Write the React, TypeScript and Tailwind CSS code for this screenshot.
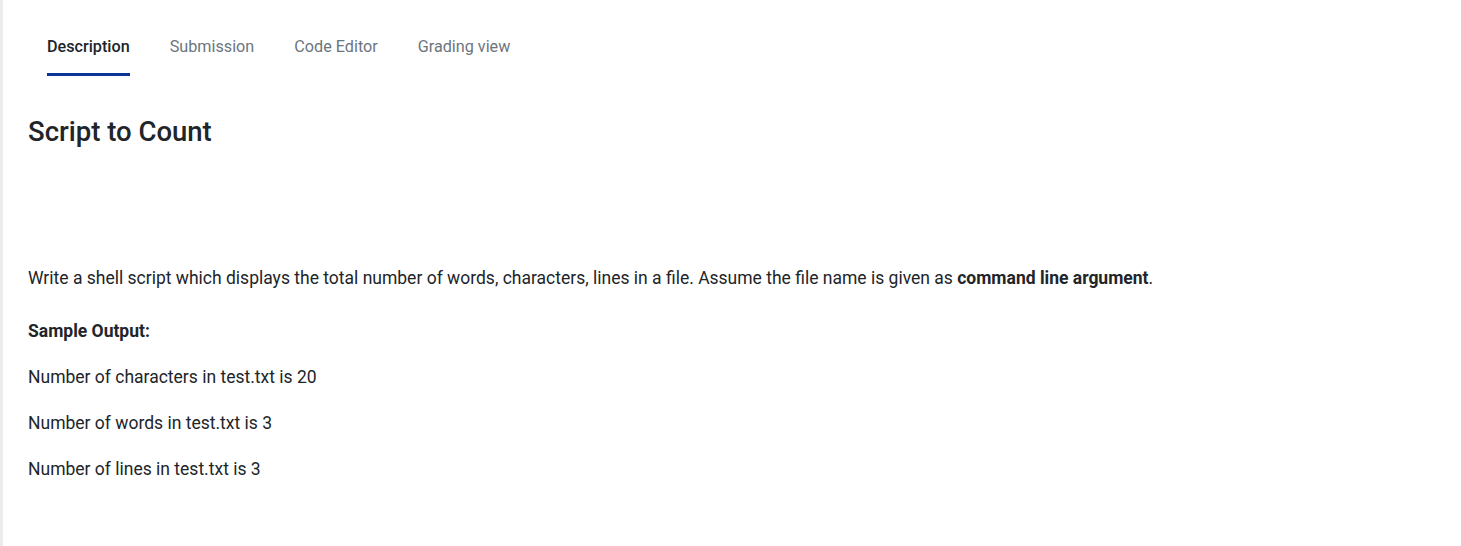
import React from "react";

const tabs = ["Description", "Submission", "Code Editor", "Grading view"];

export default function App() {
  return (
    <div
      className="min-h-[546px] w-full bg-white border-l-[3px] border-[#ebebeb] text-[#212529]"
      style={{ fontFamily: "Roboto, 'Liberation Sans', sans-serif" }}
    >
      <div className="flex pl-[24px] pt-[22px]">
        {tabs.map((t, i) => (
          <div key={t} className="mx-5 flex flex-col">
            <span
              className={`h-[51px] pt-[15px] text-[16.2px] leading-[20px] ${
                i === 0 ? "font-medium text-[#212529]" : "text-[#6c757d]"
              }`}
            >
              {t}
            </span>
            <span className={`h-[3px] ${i === 0 ? "bg-[#0a3597]" : "bg-transparent"}`} />
          </div>
        ))}
      </div>
      <div className="pl-[25px]">
        <h1 className="mt-[40px] text-[27.5px] leading-[32px] font-medium">Script to Count</h1>
        <p className="mt-[118px] text-[17.5px] leading-[24px]">
          Write a shell script which displays the total number of words, characters, lines in a file. Assume the file name is given as{" "}
          <strong className="font-bold">command line argument</strong>.
        </p>
        <p className="mt-[29px] text-[17.5px] leading-[24px] font-bold">Sample Output:</p>
        <p className="mt-[22px] text-[17.5px] leading-[24px]">Number of characters in test.txt is 20</p>
        <p className="mt-[22px] text-[17.5px] leading-[24px]">Number of words in test.txt is 3</p>
        <p className="mt-[22px] text-[17.5px] leading-[24px]">Number of lines in test.txt is 3</p>
      </div>
    </div>
  );
}
